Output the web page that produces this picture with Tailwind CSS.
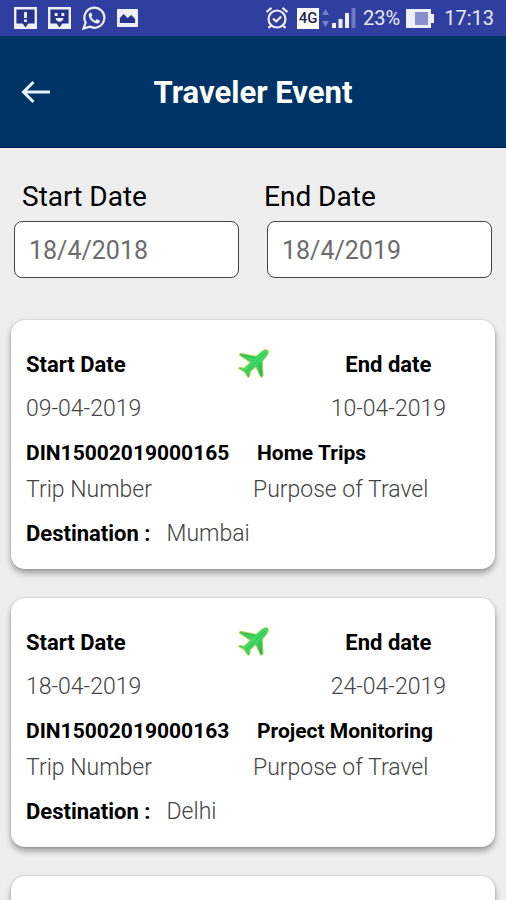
<!DOCTYPE html>
<html lang="en">
<head>
<meta charset="utf-8">
<meta name="viewport" content="width=device-width, initial-scale=1">
<title>Traveler Event</title>
<script src="https://cdn.jsdelivr.net/npm/@tailwindcss/browser@4"></script>
</head>
<body class="flex h-screen flex-col overflow-hidden bg-[#eeeeee] font-[Roboto,sans-serif] text-black">
<svg class="absolute size-0" aria-hidden="true">
  <defs>
    <linearGradient id="leaf" x1="0" y1="0" x2="1" y2="1">
      <stop offset="0" stop-color="#2fbf50"/><stop offset=".5" stop-color="#3fdc68"/><stop offset="1" stop-color="#1fa548"/>
    </linearGradient>
    <symbol id="plane" viewBox="8 11 30 30" overflow="visible">
      <path d="M37.500 10c-2-.8-3.800 0-5.500 1.300L26 16.300 10.200 13.300 9.300 15l11 7.300-6.300 6-4.500-1-.8 1.200 5.600 3.300 3.700 5.700 1.800-1.200.3-4.300 5.700-5.300 5 10.600 2.200-1.200-.6-14.800 4.600-5.800c1.300-1.800 1.700-4 .5-5.500z" fill="url(#leaf)" stroke="#b5cf4a" stroke-width="1" stroke-linejoin="round"/>
      <path d="M35.500 12.500 16.500 31M26 18l-12-3M29 22.500l2.500 12" fill="none" stroke="#1fae52" stroke-width="1" opacity=".6"/>
    </symbol>
  </defs>
</svg>

<div class="flex h-9 shrink-0 items-center justify-between bg-[#303f9f] pr-3 pl-[14px] text-[20px] leading-6 text-[#e8eafa]">
  <div class="flex items-center gap-[11px]">
    <svg class="h-[22px] w-[23px]" viewBox="0 0 24 22" preserveAspectRatio="none" aria-hidden="true"><path d="M0 0h24v22H0z" fill="#eef0ff"/><path d="M2.500 2.500h19v14H15l-3 4-3-4H2.500z" fill="#27348c"/><path d="M10.500 5h3v6h-3zM10.500 12.500h3v2.500h-3z" fill="#eef0ff"/></svg>
    <svg class="h-[22px] w-[23px]" viewBox="0 0 24 22" preserveAspectRatio="none" aria-hidden="true"><path d="M0 0h24v22H0z" fill="#eef0ff"/><path d="M2.500 2.500h19v14H15l-3 4-3-4H2.500z" fill="#27348c"/><path d="M7 6h3v3H7zM14 6h3v3h-3zM8 11h8c0 5-8 5-8 0z" fill="#eef0ff"/></svg>
    <svg class="size-6" viewBox="0 0 24 24" fill="#eef0ff" aria-hidden="true"><path d="M1.500 22.500 3.600 16.500A10 10 0 1 1 7.800 20.600z" fill="none" stroke="#eef0ff" stroke-width="2.200"/><path d="M8.700 6.500c-.5-.1-2 1-2 2.700 0 3.500 5 8.300 8.500 8.300 1.500 0 2.800-1.200 2.800-2.500 0-.6-2.800-2-3.300-1.700l-1.200 1.400c-1.700-.5-3.500-2.200-4.200-4l1-1.300c.2-.5-1-2.900-1.600-2.900z"/></svg>
    <svg class="h-[18px] w-[21px]" viewBox="0 0 22 18" preserveAspectRatio="none" aria-hidden="true"><rect width="22" height="18" rx="1" fill="#eef0ff"/><path d="M3 14V9l4-4 4 4 4-3 4 4v4z" fill="#27348c"/></svg>
  </div>
  <div class="flex items-center">
    <svg class="size-6" viewBox="0 0 24 24" fill="none" stroke="#eef0ff" stroke-width="2.200" aria-hidden="true"><circle cx="12" cy="13" r="8.500"/><path d="m8 12.500 3.200 3 5-5M1.500 6l5-4.200M22.500 6l-5-4.200M6 19.500 3.500 22M18 19.500l2.500 2.500"/></svg>
    <span class="ml-2 flex h-[21px] w-[22px] items-center justify-center bg-white text-[15px] font-medium text-[#20264f]">4G</span>
    <svg class="ml-[3px] h-[18px] w-[7px]" viewBox="0 0 7 18" fill="#7480c8" aria-hidden="true"><path d="M3.500 0 7 6H0zM3.500 18 7 12H0z"/></svg>
    <svg class="ml-[3px] h-5 w-6" viewBox="0 0 24 20" fill="#eef0ff" aria-hidden="true"><path d="M0 15h4v5H0zM6.500 11h4v9h-4zM13 5h4v15h-4z"/><path d="M19.500 0h4v20h-4z" fill="#6f7ac4"/></svg>
    <span class="ml-[7px]">23%</span>
    <svg class="ml-[6px] h-[19px] w-7" viewBox="0 0 28 19" aria-hidden="true"><path d="M0 0h25v5h3v9h-3v5H0z" fill="#eef0ff"/><path d="M9 3h13v13H9z" fill="#8790cd"/></svg>
    <span class="ml-[10px]">17:13</span>
  </div>
</div>

<header class="grid h-28 shrink-0 grid-cols-[1fr_auto_1fr] items-center border-b border-[#001a4d] bg-[#003366] px-5 pt-[2px] text-white">
  <button type="button" aria-label="Back" class="justify-self-start">
    <svg class="size-8" viewBox="0 0 32 32" fill="none" stroke="#e5f4fa" stroke-width="3" aria-hidden="true"><path d="M30 15H3M13.500 5 3.500 15l10 10"/></svg>
  </button>
  <h1 class="text-[31px] leading-9 font-bold">Traveler Event</h1>
</header>

<main class="flex min-h-0 flex-1 flex-col">
  <form class="grid grid-cols-2 gap-7 px-[14px] pt-[33px]">
    <div>
      <label for="start" class="block pl-2 text-[28px] leading-8">Start Date</label>
      <input id="start" type="text" value="18/4/2018" class="mt-2 h-[57px] w-full rounded-lg border border-[#444] bg-white px-[14px] pt-[2px] text-[25px] text-[#6c6c6c]">
    </div>
    <div>
      <label for="end" class="-ml-[3px] block text-[28px] leading-8">End Date</label>
      <input id="end" type="text" value="18/4/2019" class="mt-2 h-[57px] w-full rounded-lg border border-[#444] bg-white px-[14px] pt-[2px] text-[25px] text-[#6c6c6c]">
    </div>
  </form>

  <section class="mt-[42px] flex min-h-0 flex-1 flex-col gap-[29px] px-[11px] text-[23px] leading-7 font-light text-[#444]" aria-label="Trips">
    <article class="shrink-0 rounded-[14px] bg-white px-[15px] pt-[31px] pb-[21px] shadow-[0_4px_6px_rgba(0,0,0,0.35),0_0_2px_rgba(0,0,0,0.2)]">
      <div class="grid grid-cols-[1fr_auto_1fr]">
        <div><h2 class="text-[22px] font-bold text-black">Start Date</h2><p class="mt-4">09-04-2019</p></div>
        <svg class="size-[30px] overflow-visible" aria-hidden="true"><use href="#plane"/></svg>
        <div class="mr-[34px] justify-self-end text-center"><h2 class="text-[22px] font-bold text-black">End date</h2><p class="mt-4">10-04-2019</p></div>
      </div>
      <div class="mt-4 grid grid-cols-2">
        <div><h3 class="text-[21px] font-bold text-black">DIN15002019000165</h3><p class="mt-[9px]">Trip Number</p></div>
        <div><h3 class="pl-1 text-[21px] font-bold text-black">Home Trips</h3><p class="mt-[9px]">Purpose of Travel</p></div>
      </div>
      <p class="mt-4"><strong class="mr-4 text-[22px] font-bold text-black">Destination :</strong>Mumbai</p>
    </article>
    <article class="shrink-0 rounded-[14px] bg-white px-[15px] pt-[31px] pb-[21px] shadow-[0_4px_6px_rgba(0,0,0,0.35),0_0_2px_rgba(0,0,0,0.2)]">
      <div class="grid grid-cols-[1fr_auto_1fr]">
        <div><h2 class="text-[22px] font-bold text-black">Start Date</h2><p class="mt-4">18-04-2019</p></div>
        <svg class="size-[30px] overflow-visible" aria-hidden="true"><use href="#plane"/></svg>
        <div class="mr-[34px] justify-self-end text-center"><h2 class="text-[22px] font-bold text-black">End date</h2><p class="mt-4">24-04-2019</p></div>
      </div>
      <div class="mt-4 grid grid-cols-2">
        <div><h3 class="text-[21px] font-bold text-black">DIN15002019000163</h3><p class="mt-[9px]">Trip Number</p></div>
        <div><h3 class="pl-1 text-[21px] font-bold text-black">Project Monitoring</h3><p class="mt-[9px]">Purpose of Travel</p></div>
      </div>
      <p class="mt-4"><strong class="mr-4 text-[22px] font-bold text-black">Destination :</strong>Delhi</p>
    </article>
    <article class="shrink-0 rounded-[14px] bg-white px-[15px] pt-[31px] pb-[21px] shadow-[0_4px_6px_rgba(0,0,0,0.35),0_0_2px_rgba(0,0,0,0.2)]"></article>
  </section>
</main>
</body>
</html>
